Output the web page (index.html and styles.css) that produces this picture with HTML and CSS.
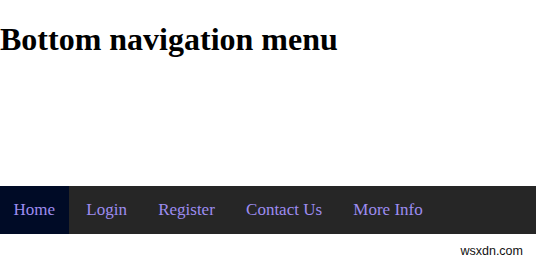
FILE: index.html
```html
<!DOCTYPE html>
<html lang="en">
<head>
  <meta charset="UTF-8" />
  <title>Bottom navigation menu</title>
  <link rel="stylesheet" href="styles.css">
</head>
<body>
  <h1>Bottom navigation menu</h1>
  <nav class="navbar">
    <a href="#" class="active">Home</a>
    <a href="#">Login</a>
    <a href="#">Register</a>
    <a href="#">Contact Us</a>
    <a href="#">More Info</a>
  </nav>
  <div class="mark">wsxdn.com</div>
</body>
</html>
```
FILE: styles.css
```css
body {
  margin: 0;
  font-family: "Liberation Serif", "Times New Roman", serif;
  background: #fff;
}
h1 {
  margin: 21px 0 0;
  font-size: 32px;
  line-height: 37px;
}
.navbar {
  margin-top: 128px;
  background-color: #262626;
  font-size: 17px;
}
.navbar a {
  display: inline-block;
  padding: 14px 13.5px;
  color: #9d8cf0;
  text-decoration: none;
}
.navbar a.active {
  background-color: #000b26;
}
.mark {
  text-align: right;
  padding: 10px 13px 0 0;
  font-family: "Liberation Sans", Arial, sans-serif;
  font-size: 12.5px;
  color: #111;
}
```
